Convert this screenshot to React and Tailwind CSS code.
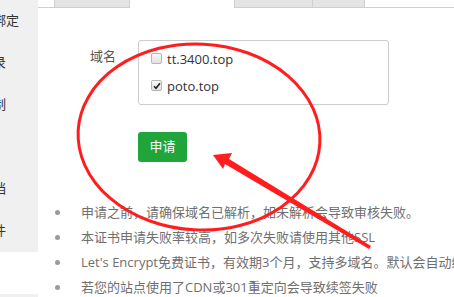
import React from "react";

const FONT = { fontFamily: '"Open Sans","Noto Sans CJK SC",sans-serif' };

function Check({ checked }) {
  return (
    <span className="relative inline-block w-[11px] h-[11px] rounded-[2px] border border-[#b5b5b5] bg-gradient-to-b from-[#f8f8f8] to-[#e2e2e2] shrink-0">
      {checked && (
        <svg className="absolute left-[1px] top-[1px]" width="8" height="8" viewBox="0 0 8 8">
          <path d="M1 4.2 L3 6.3 L7 1.2" fill="none" stroke="#222" strokeWidth="1.6" />
        </svg>
      )}
    </span>
  );
}

const menu = ["子目录绑定", "网站目录", "流量限制", "伪静态", "默认文档", "配置文件", "SSL", "PHP版本"];

const notes = [
  "申请之前，请确保域名已解析，如未解析会导致审核失败。",
  "本证书申请失败率较高，如多次失败请使用其他SSL",
  "Let's Encrypt免费证书，有效期3个月，支持多域名。默认会自动续签",
  "若您的站点使用了CDN或301重定向会导致续签失败",
];

export default function App() {
  return (
    <div className="relative w-[454px] h-[297px] overflow-hidden bg-white flex" style={FONT}>
      <div className="w-[38px] shrink-0 flex flex-col overflow-hidden">
        {menu.map((m, i) => (
          <div
            key={m}
            className={`h-[42px] shrink-0 flex items-center whitespace-nowrap text-[13px] text-[#333] ${i === 6 ? "bg-white" : "bg-[#f0f0f0]"}`}
          >
            <span className="ml-[-46px]">{m}</span>
          </div>
        ))}
      </div>

      <div className="flex-1 flex flex-col min-w-0">
        <div className="flex h-[8px] shrink-0">
          <div className="w-[16px] border-b border-[#cfcfcf]" />
          <div className="w-[76px] bg-[#e4e4e4] border-x border-b border-[#cfcfcf]" />
          <div className="w-[104px] bg-white" />
          <div className="w-[78px] bg-[#e4e4e4] border-l border-b border-[#cfcfcf]" />
          <div className="w-[53px] bg-[#e4e4e4] border-x border-b border-[#cfcfcf]" />
          <div className="flex-1 border-b border-[#cfcfcf]" />
        </div>

        <div className="flex mt-[32px]">
          <div className="w-[78px] text-right text-[13px] text-[#555] pt-[7px] leading-[18px]">域名</div>
          <div className="ml-[22px] w-[251px] h-[65px] border border-[#ccc] rounded-[3px] pl-[12px] pt-[12px] flex flex-col gap-[16px]">
            <label className="flex items-center h-[11px] gap-[5px] text-[13px] text-[#333]">
              <Check />
              <span className="leading-[16px]">tt.3400.top</span>
            </label>
            <label className="flex items-center h-[11px] gap-[5px] text-[13px] text-[#333]">
              <Check checked />
              <span className="leading-[16px]">poto.top</span>
            </label>
          </div>
        </div>

        <div className="ml-[100px] mt-[27px]">
          <button className="w-[49px] h-[30px] bg-[#20a53a] rounded-[3px] text-white text-[13px] flex items-center justify-center">
            申请
          </button>
        </div>

        <ul className="mt-[38px] flex flex-col">
          {notes.map((n) => (
            <li key={n} className="h-[25px] flex items-center whitespace-nowrap text-[13px] text-[#6f6f6f]">
              <span className="ml-[17px] w-[5px] h-[5px] rounded-full bg-[#9a9a9a] shrink-0" />
              <span className="ml-[21px]">{n}</span>
            </li>
          ))}
        </ul>
      </div>

      <svg className="absolute inset-0 pointer-events-none" width="454" height="297" viewBox="0 0 454 297">
        <ellipse cx="199" cy="137" rx="121" ry="93" fill="none" stroke="#ff1d1d" strokeWidth="3" transform="rotate(3 199 137)" />
        <polygon
          points="213,155 232,153 229,159 371,246 369,249 225,164 223,169"
          fill="#ff1d1d"
        />
      </svg>
    </div>
  );
}
